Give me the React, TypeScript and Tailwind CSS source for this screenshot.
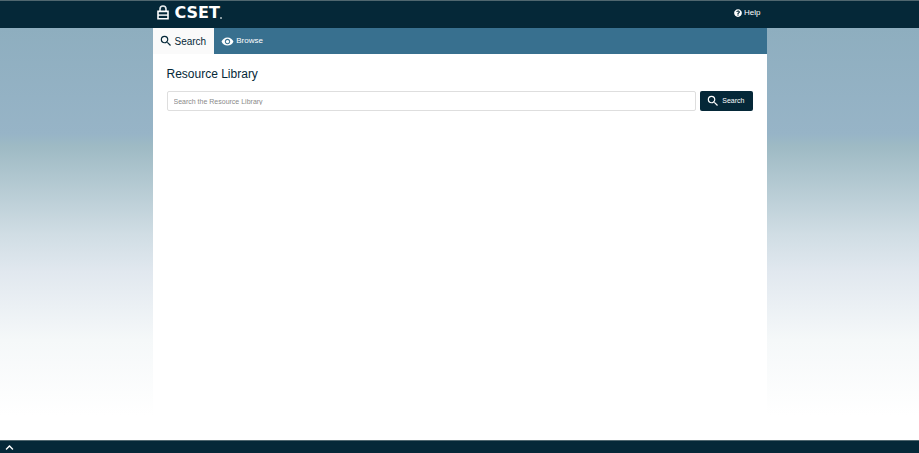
import { FaChevronUp, FaQuestionCircle } from 'react-icons/fa';
import { MdSearch, MdVisibility } from 'react-icons/md';

function LockMark() {
  return (
    <svg className="w-3 h-4" viewBox="0 0 12 16" fill="none">
      <path d="M3 6.4V4a3 3 0 0 1 6 0v2.4" stroke="#e6ebed" strokeWidth="1.6" />
      <path d="M1 6.4h10v7.4H1z" stroke="#fff" strokeWidth="1.6" />
      <path d="M1 10.1h10" stroke="#fff" strokeWidth="1.4" />
    </svg>
  );
}

export default function App() {
  return (
    <div
      className="min-h-screen flex flex-col bg-[linear-gradient(to_bottom,#8eaebf_28px,#97b4c7_134px,#9ebac4_146px,#d0dde4_234px,#e1e8ef_272px,#f5f8f9_340px,#fff_415px)] text-[#052838]"
      style={{ fontFamily: "'Liberation Sans', Arial, sans-serif" }}
    >
      {/* Top bar */}
      <header className="bg-[#052838] border-t border-[#50676f]">
        <div className="w-full max-w-[614px] h-[27px] mx-auto px-1 pb-1 flex items-center justify-between text-white">
          <a href="#home" className="flex items-center gap-1.5" aria-label="CSET home">
            <LockMark />
            <span className="flex items-end">
              <span
                className="text-[16px] leading-[16px] font-bold"
                style={{ fontFamily: "'DejaVu Sans', Verdana, sans-serif" }}
              >
                CSET
              </span>
              <span className="w-0.5 h-0.5 mb-0.5 rounded-full bg-[#b4c0c5]" />
            </span>
          </a>
          <a href="#help" className="flex items-center gap-0.5 px-0.5 text-[8px]">
            <FaQuestionCircle className="w-2 h-2" />
            Help
          </a>
        </div>
      </header>

      <main className="w-full max-w-[614px] mx-auto flex-1 bg-white">
        {/* Tabs */}
        <nav className="h-[26px] flex bg-[#38708f]">
          <a href="#search" className="flex items-center gap-0.5 pl-1.5 pr-2 bg-[#fafafa] text-[10px]">
            <MdSearch className="w-3.5 h-3.5" />
            Search
          </a>
          <a href="#browse" className="flex items-center gap-0.5 px-[7px] text-[8px] text-white">
            <MdVisibility className="w-[13px] h-[13px]" />
            Browse
          </a>
        </nav>

        {/* Search form */}
        <section className="px-3.5 pt-3">
          <h1 className="text-[12px] leading-4">Resource Library</h1>
          <form className="flex gap-1 mt-[9px]" onSubmit={(e) => e.preventDefault()}>
            <input
              type="text"
              aria-label="Search the Resource Library"
              placeholder="Search the Resource Library"
              className="flex-1 min-w-0 h-5 px-1.5 border border-[#dedede] rounded-xs bg-white text-[7px] placeholder:text-[#8a8a8a] outline-none"
            />
            <button
              type="submit"
              className="h-5 pl-1.5 pr-2 flex items-center gap-0.5 rounded-xs bg-[#052838] text-[7px] text-white"
            >
              <MdSearch className="w-3.5 h-3.5" />
              Search
            </button>
          </form>
        </section>
      </main>

      {/* Bottom bar */}
      <footer className="h-[13px] px-[5px] flex items-center bg-[#052838] border-t border-[#50676f]">
        <button type="button" aria-label="Expand footer" className="text-white">
          <FaChevronUp className="w-[9px] h-[9px]" />
        </button>
      </footer>
    </div>
  );
}
